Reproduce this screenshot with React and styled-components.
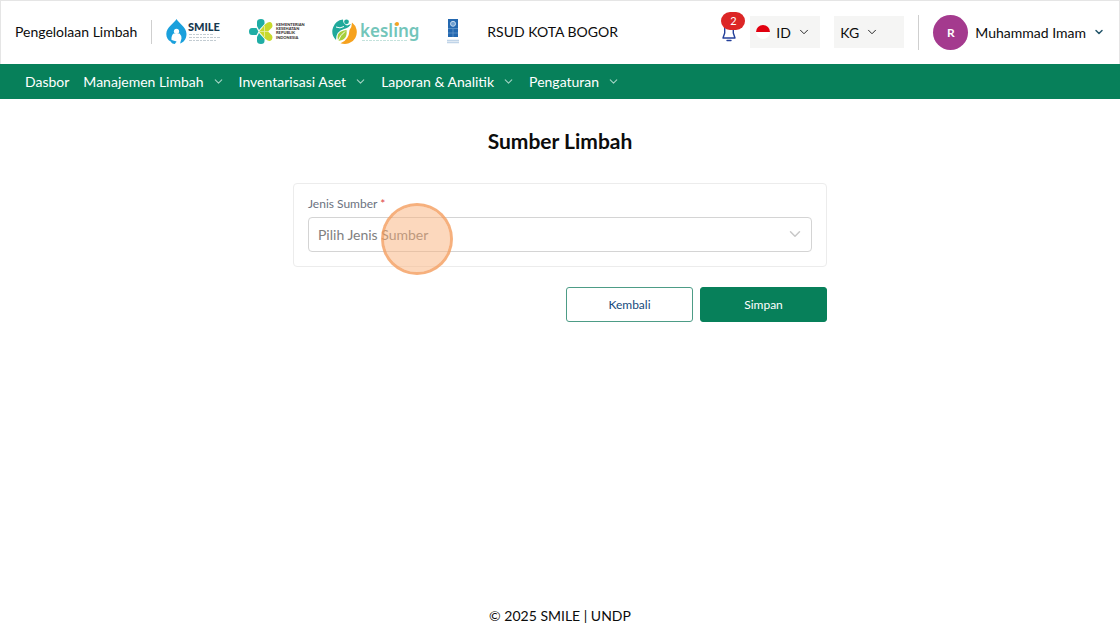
import React from 'react';
import styled, { createGlobalStyle } from 'styled-components';
import { ChevronDown } from 'lucide-react';

const GlobalStyle = createGlobalStyle`
  *, *::before, *::after {
    box-sizing: border-box;
  }

  body {
    margin: 0;
    background: #fff;
    color: #0c0c0c;
    font-family: Lato, 'Open Sans', sans-serif;
    font-size: 14px;
    line-height: 20px;
  }

  button, select {
    font-family: inherit;
  }
`;

const Page = styled.div`
  display: flex;
  flex-direction: column;
  min-height: 100vh;
`;

const Header = styled.header`
  display: flex;
  align-items: center;
  justify-content: space-between;
  height: 64px;
  padding: 0 14px 1px;
  border: 1px solid #e5e5e5;
  border-bottom: 0;
`;

const HeaderGroup = styled.div`
  display: flex;
  align-items: center;
`;

const AppName = styled.span`
  font-size: 14px;
`;

const Divider = styled.span`
  width: 1px;
  height: ${(props) => props.$height}px;
  margin: 0 14px;
  background: #cfcfcf;
`;

const Logos = styled.div`
  display: flex;
  align-items: center;
  gap: 27px;

  svg {
    display: block;
  }
`;

const Facility = styled.span`
  margin-left: 28px;
  font-size: 14px;
`;

const BellButton = styled.button`
  position: relative;
  display: flex;
  width: 16px;
  height: 20px;
  margin-right: 13px;
  padding: 0;
  border: 0;
  background: none;
  cursor: pointer;
`;

const Badge = styled.span`
  position: absolute;
  top: -10px;
  left: 0;
  width: 24px;
  height: 18px;
  border-radius: 9px;
  background: #dc2626;
  color: #fff;
  font-size: 11px;
  line-height: 18px;
  text-align: center;
`;

const Switcher = styled.button`
  display: flex;
  align-items: center;
  gap: 6px;
  width: 70px;
  height: 32px;
  padding: 0 6px;
  border: 0;
  background: #f5f5f4;
  color: #0c0c0c;
  font-size: 14px;
  cursor: pointer;

  & + & {
    margin-left: 14px;
  }
`;

const UserButton = styled.button`
  display: flex;
  align-items: center;
  gap: 7px;
  padding: 0;
  border: 0;
  background: none;
  color: #0c0c0c;
  font-size: 14px;
  cursor: pointer;
`;

const Avatar = styled.span`
  width: 35px;
  height: 35px;
  border-radius: 50%;
  background: #a43a8e;
  color: #fff;
  font-size: 12px;
  font-weight: bold;
  line-height: 35px;
  text-align: center;
`;

const NavBar = styled.nav`
  display: flex;
  align-items: center;
  gap: 14px;
  height: 35px;
  padding: 0 25px;
  background: #07805a;
`;

const NavLink = styled.a`
  display: flex;
  align-items: center;
  gap: 8px;
  color: #fff;
  font-size: 14px;
  text-decoration: none;

  svg {
    color: #a3d3c3;
  }
`;

const Main = styled.main`
  flex: 1;
  width: 100%;
  max-width: 534px;
  margin: 0 auto;
`;

const Title = styled.h1`
  margin: 28px 0;
  font-size: 21px;
  font-weight: bold;
  line-height: 28px;
  text-align: center;
`;

const Card = styled.section`
  padding: 10px 14px 14px;
  border: 1px solid #ececec;
  border-radius: 4px;
`;

const Label = styled.label`
  display: block;
  margin-bottom: 3px;
  color: #6b7280;
  font-size: 12px;
`;

const Required = styled.span`
  color: #e04444;
`;

const SelectBox = styled.div`
  position: relative;

  svg {
    position: absolute;
    top: 8px;
    right: 8px;
    color: #c8c8c8;
    pointer-events: none;
  }
`;

const Select = styled.select`
  display: block;
  width: 100%;
  height: 35px;
  padding: 0 9px;
  border: 1px solid #d4d4d4;
  border-radius: 4px;
  background: #fff;
  color: #808080;
  font-size: 14px;
  appearance: none;
`;

/* Highlights the spot being clicked */
const ClickMarker = styled.span`
  position: absolute;
  top: -14px;
  left: 73px;
  width: 72px;
  height: 72px;
  border: 3px solid rgba(244, 156, 92, 0.8);
  border-radius: 50%;
  background: rgba(250, 178, 123, 0.5);
  background-clip: padding-box;
  pointer-events: none;
`;

const Actions = styled.div`
  display: flex;
  justify-content: flex-end;
  gap: 7px;
  margin-top: 20px;
`;

const Button = styled.button`
  width: 127px;
  height: 35px;
  border: 1px solid ${(props) => (props.$primary ? '#07805a' : '#4d9c86')};
  border-radius: 3px;
  background: ${(props) => (props.$primary ? '#07805a' : '#fff')};
  color: ${(props) => (props.$primary ? '#fff' : '#164a7c')};
  font-size: 12px;
  cursor: pointer;
`;

const Footer = styled.footer`
  font-size: 14px;
  text-align: center;
`;

const LogoText = styled.text`
  font-family: ${(props) => props.$family || 'Lato'}, sans-serif;
  font-size: ${(props) => props.$size}px;
  font-weight: ${(props) => props.$weight || 400};
`;

const SmileLogo = () => (
  <svg width="56" height="26" viewBox="0 0 56 26" role="img" aria-label="SMILE">
    <path d="M10.500 0C12.500 4 20.500 8 20.500 15C20.500 20 17.500 23.500 14 24.600L4.500 22.500C2 21 .3 18.500 .3 15C.3 8 8.500 4 10.500 0Z" fill="#1aa0dc" />
    <circle cx="10.500" cy="12.300" r="2.600" fill="#fff" />
    <path d="M7.500 14.500H13.500Q16 17 15.500 19.500Q15 21 14 25H9.500L10.500 22.500L5.500 21Q5 17 7.500 14.500Z" fill="#fff" />
    <path d="M5 21.500C7 21 8 23.500 10 22.500L9 25C7 25 5.500 24 5 23Z" fill="#1aa0dc" />
    <LogoText x="22" y="12" $size={11} $weight={900} fill="#17384f">SMILE</LogoText>
    <g stroke="#c3ccd2" strokeWidth="1" strokeDasharray="3 1 2 1">
      <path d="M23 15.500H47M23 18.500H55M23 21.500H50" />
    </g>
  </svg>
);

const KemenkesLogo = () => (
  <svg width="56" height="26" viewBox="0 0 56 26" role="img" aria-label="Kementerian Kesehatan">
    <g fill="#20ada5">
      <path d="M10 11L8 7V3Q8 0 12 0Q15.500 0 15.500 3V5Z" />
      <path d="M10 14L8 18V22Q8 25 12 25Q15.500 25 15.500 22V20Z" />
      <path d="M9.500 12.500L7.500 16H3Q0 16 0 12.500Q0 9 3 9H7.500Z" />
    </g>
    <path d="M10 12.500L16.500 5Q21 1.500 23 4.500Q24 7 23 8.500L19 12.500L23 16.500Q24 18 23 20.500Q21 23.500 16.500 20Z" fill="#c8d92c" />
    <path d="M10 12.500H19M15.500 7V18" stroke="#eef3b8" strokeWidth=".7" />
    <g fill="#3a3436">
      <LogoText x="27" y="7" $size={4} $weight={900}>KEMENTERIAN</LogoText>
      <LogoText x="27" y="11" $size={4} $weight={900}>KESEHATAN</LogoText>
      <LogoText x="27" y="15" $size={4} $weight={900}>REPUBLIK</LogoText>
      <LogoText x="27" y="20" $size={4} $weight={900}>INDONESIA</LogoText>
    </g>
  </svg>
);

const KeslingLogo = () => (
  <svg width="88" height="26" viewBox="0 0 88 26" role="img" aria-label="kesling">
    <path d="M11 .5A12 12 0 0 0 4 21Q4 12 12 10Q17 9 19 5L15 6.500Q11 5 11 .5Z" fill="#20a99b" />
    <path d="M20 3.500A12 12 0 0 1 8.500 24.300Q17 21 17.500 11Q20 8 20 3.500Z" fill="#f6a21e" />
    <path d="M6 21Q3.500 12.500 14.500 11Q16 21 6 22Z" fill="#a7cf3b" />
    <path d="M5.500 23Q8 16 13 12.500M4 8Q8 10 12 7.500" stroke="#fff" strokeWidth="1" fill="none" />
    <circle cx="14.500" cy="2.800" r="2.400" fill="#20a99b" />
    <LogoText x="28" y="18" $family="'Noto Sans'" $size={17} $weight={600} fill="#73c5ba">kesling</LogoText>
    <circle cx="65" cy="5" r="2" fill="#f6a21e" />
    <path d="M30 21.500H76" stroke="#c4e2dc" strokeDasharray="3 1 2 1" />
  </svg>
);

const UndpLogo = () => (
  <svg width="12" height="26" viewBox="0 0 12 26" role="img" aria-label="UNDP">
    <rect x="1" y="0" width="10" height="18" fill="#2468b0" />
    <circle cx="6" cy="4.800" r="2.500" fill="#6f9fd0" stroke="#c4daee" />
    <path d="M1 9.500H11M6 10V18M1 14H11" stroke="#6d9fce" strokeWidth=".7" />
    <path d="M0 21.500H12M0 23.500H12" stroke="#c0d4e8" strokeWidth="1.600" />
  </svg>
);

const BellIcon = () => (
  <svg width="16" height="20" viewBox="0 0 16 20" fill="none" stroke="#24409a" strokeWidth="1.400">
    <path d="M8 2C5 2 3.700 4 3.700 7V11L2 16H14L12.300 11V7C12.300 4 11 2 8 2Z" strokeLinejoin="round" />
    <path d="M6 18.500H10" strokeLinecap="round" />
  </svg>
);

const FlagIcon = () => (
  <svg width="14" height="14" viewBox="0 0 14 14" aria-hidden="true">
    <circle cx="7" cy="7" r="7" fill="#fff" />
    <path d="M0 7A7 7 0 0 1 14 7Z" fill="#e1000f" />
  </svg>
);

const navItems = [
  { label: 'Dasbor' },
  { label: 'Manajemen Limbah', hasMenu: true },
  { label: 'Inventarisasi Aset', hasMenu: true },
  { label: 'Laporan & Analitik', hasMenu: true },
  { label: 'Pengaturan', hasMenu: true },
];

const App = () => (
  <>
    <GlobalStyle />
    <Page>
      <Header>
        <HeaderGroup>
          <AppName>Pengelolaan Limbah</AppName>
          <Divider $height={24} />
          <Logos>
            <SmileLogo />
            <KemenkesLogo />
            <KeslingLogo />
            <UndpLogo />
          </Logos>
          <Facility>RSUD KOTA BOGOR</Facility>
        </HeaderGroup>
        <HeaderGroup>
          <BellButton type="button" aria-label="Notifikasi">
            <BellIcon />
            <Badge>2</Badge>
          </BellButton>
          <Switcher type="button">
            <FlagIcon />
            ID
            <ChevronDown size={14} strokeWidth={1.5} />
          </Switcher>
          <Switcher type="button">
            KG
            <ChevronDown size={14} strokeWidth={1.5} />
          </Switcher>
          <Divider $height={35} />
          <UserButton type="button">
            <Avatar>R</Avatar>
            Muhammad Imam
            <ChevronDown size={12} color="#24566b" strokeWidth={3} />
          </UserButton>
        </HeaderGroup>
      </Header>
      <NavBar>
        {navItems.map((item) => (
          <NavLink key={item.label} href="#">
            {item.label}
            {item.hasMenu && <ChevronDown size={13} />}
          </NavLink>
        ))}
      </NavBar>
      <Main>
        <Title>Sumber Limbah</Title>
        <Card>
          <Label htmlFor="jenis-sumber">
            Jenis Sumber <Required>*</Required>
          </Label>
          <SelectBox>
            <Select id="jenis-sumber" defaultValue="">
              <option value="">Pilih Jenis Sumber</option>
            </Select>
            <ChevronDown size={18} />
            <ClickMarker />
          </SelectBox>
        </Card>
        <Actions>
          <Button type="button">Kembali</Button>
          <Button type="submit" $primary>Simpan</Button>
        </Actions>
      </Main>
      <Footer>© 2025 SMILE | UNDP</Footer>
    </Page>
  </>
);

export default App;
